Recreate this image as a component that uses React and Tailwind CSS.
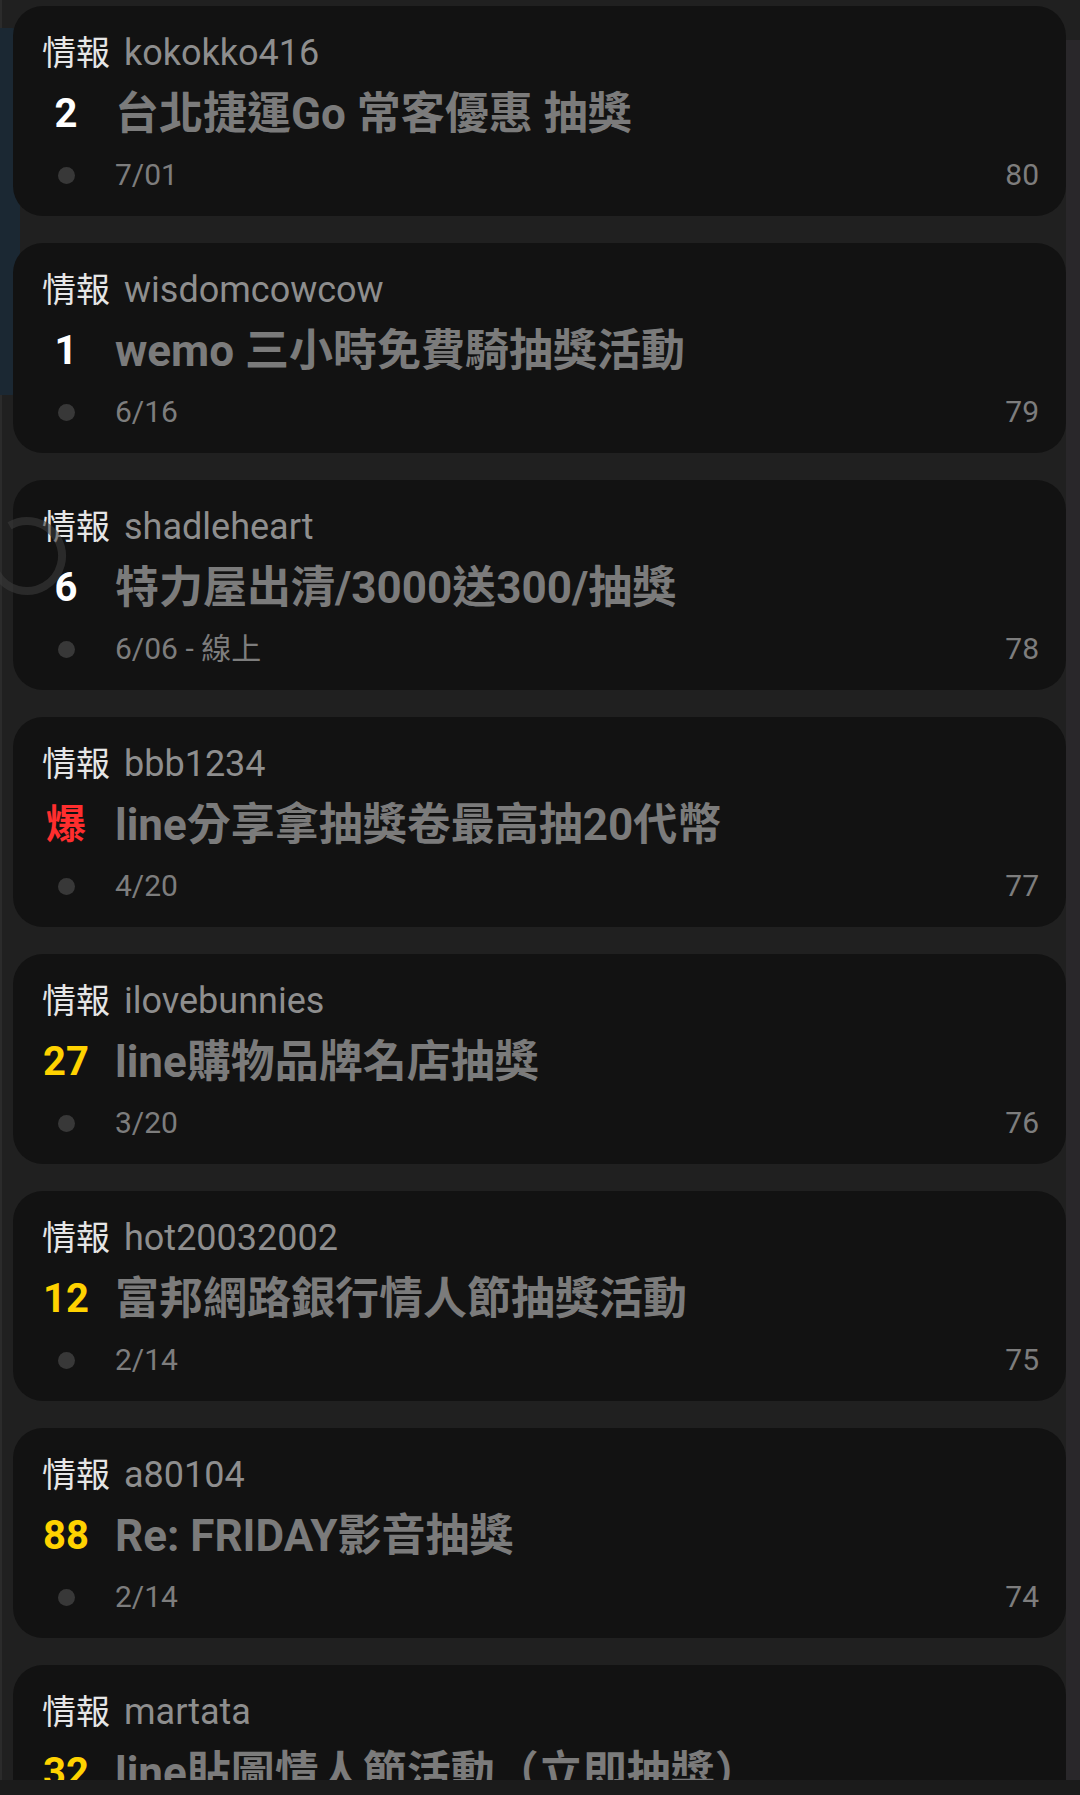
import React from 'react';

const posts = [
  { user: 'kokokko416', count: '2', title: '台北捷運Go 常客優惠 抽獎', date: '7/01', no: 80 },
  { user: 'wisdomcowcow', count: '1', title: 'wemo 三小時免費騎抽獎活動', date: '6/16', no: 79 },
  { user: 'shadleheart', count: '6', title: '特力屋出清/3000送300/抽獎', date: '6/06 - 線上', no: 78 },
  { user: 'bbb1234', count: '爆', title: 'line分享拿抽獎卷最高抽20代幣', date: '4/20', no: 77 },
  { user: 'ilovebunnies', count: '27', title: 'line購物品牌名店抽獎', date: '3/20', no: 76 },
  { user: 'hot20032002', count: '12', title: '富邦網路銀行情人節抽獎活動', date: '2/14', no: 75 },
  { user: 'a80104', count: '88', title: 'Re: FRIDAY影音抽獎', date: '2/14', no: 74 },
  { user: 'martata', count: '32', title: 'line貼圖情人節活動（立即抽獎）', date: '2/14', no: 73 },
];

const countColor = (c) => {
  if (c === '爆') return 'text-[#ff2e2e]';
  if (Number(c) >= 10) return 'text-[#ffd200]';
  return 'text-white';
};

function PostCard({ post }) {
  return (
    <div className="h-[210px] shrink-0 rounded-[30px] bg-[#121212] pl-[29px] pr-[27px] pt-[24px]">
      {/* header */}
      <div className="flex h-[46px] items-center leading-none">
        <span className="text-[34px] text-[#e6e6e6]">情報</span>
        <span className="ml-[14px] text-[36px] text-[#8e8e8e]">{post.user}</span>
      </div>

      {/* title */}
      <div className="mt-[8px] flex h-[60px] items-center">
        <span className={`w-[48px] shrink-0 text-center text-[40px] font-bold leading-none ${countColor(post.count)}`}>
          {post.count}
        </span>
        <span className="ml-[25px] whitespace-nowrap text-[44px] font-bold leading-none text-[#7b7b7b]">
          {post.title}
        </span>
      </div>

      {/* meta */}
      <div className="mt-[11px] flex h-[40px] items-center text-[30px] leading-none text-[#7d7d7d]">
        <div className="flex w-[48px] shrink-0 justify-center">
          <span className="h-[17px] w-[17px] rounded-full bg-[#383838]" />
        </div>
        <span className="ml-[25px]">{post.date}</span>
        <span className="ml-auto">{post.no}</span>
      </div>
    </div>
  );
}

export default function App() {
  return (
    <div
      className="relative h-[1795px] w-[1080px] overflow-hidden bg-[#202020]"
      style={{ fontFamily: 'Roboto, "Noto Sans CJK TC", sans-serif' }}
    >
      {/* side edges */}
      <div className="absolute left-0 top-0 h-full w-[2px] bg-[#2b2b2b]" />
      <div className="absolute left-0 top-[28px] h-[367px] w-[20px] rounded-r-[8px] bg-[#1b2833]" />
      <div className="absolute right-0 top-[40px] h-full w-[14px] bg-[#29272a]" />

      <div className="relative flex h-[1780px] flex-col gap-[27px] overflow-hidden pl-[13px] pr-[14px] pt-[6px]">
        {posts.map((p) => (
          <PostCard key={p.no} post={p} />
        ))}
      </div>

      {/* pull-to-refresh ghost spinner */}
      <svg className="absolute left-[-13px] top-[516px]" width="80" height="80" viewBox="0 0 80 80">
        <circle
          cx="40"
          cy="40"
          r="35"
          fill="none"
          stroke="#3a3a3a"
          strokeOpacity="0.6"
          strokeWidth="8"
          strokeDasharray="185 35"
          transform="rotate(-120 40 40)"
        />
      </svg>

      {/* bottom bar */}
      <div className="absolute bottom-0 left-0 h-[15px] w-full bg-[#1b1b1b]" />
    </div>
  );
}
